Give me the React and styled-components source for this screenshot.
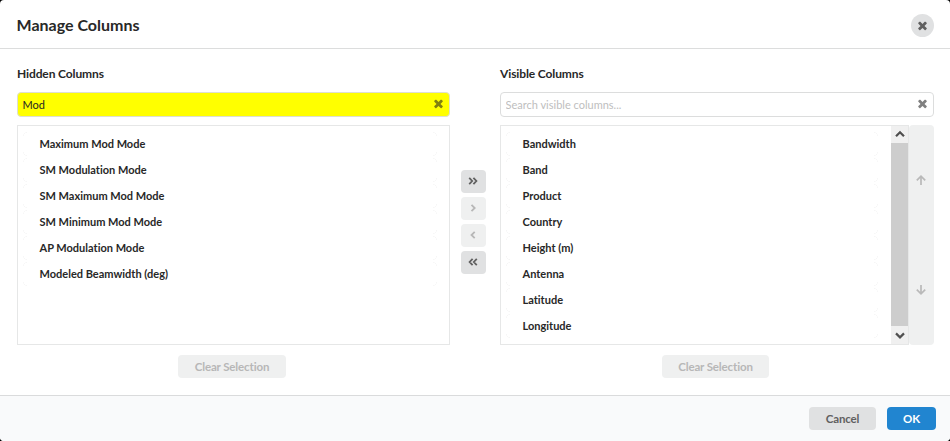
import React from 'react';
import styled, { createGlobalStyle, css } from 'styled-components';

const GlobalStyle = createGlobalStyle`
  * { box-sizing: border-box; }
  body {
    margin: 0;
    background: #000;
    font-family: Lato, "Liberation Sans", sans-serif;
    font-variant-ligatures: none;
    color: #282828;
  }
  button, input { font-family: inherit; font-variant-ligatures: none; margin: 0; }
`;

const Modal = styled.div`
  display: flex;
  flex-direction: column;
  height: 441px;
  background: #fff;
  border-radius: 4px;
  overflow: hidden;
`;

const Header = styled.header`
  display: flex;
  align-items: center;
  justify-content: space-between;
  height: 49px;
  padding: 2px 16px 0;
  border-bottom: 1px solid #dcdddd;
`;

const Title = styled.h1`
  margin: 0;
  padding: 0 0 0 0.5px;
  font-size: 16px;
  line-height: 20px;
  font-weight: 700;
`;

const CloseButton = styled.button`
  display: flex;
  align-items: center;
  justify-content: center;
  width: 23px;
  height: 23px;
  padding: 0 1px 0 0;
  border: 0;
  border-radius: 50%;
  background: #e0e1e2;
  color: #606060;
`;

const Body = styled.main`
  display: flex;
  height: 346px;
  padding: 17px 16px 0 17px;
`;

const Panel = styled.section`
  display: flex;
  flex-direction: column;
  width: ${(p) => p.$width}px;
`;

const PanelTitle = styled.h2`
  margin: 0 0 10px;
  height: 16px;
  font-size: 12px;
  line-height: 16px;
  font-weight: 700;
  letter-spacing: -0.12px;
`;

const SearchBox = styled.div`
  display: flex;
  align-items: center;
  height: 25px;
  padding: 0 4px 1px 4.5px;
  border: 1px solid ${(p) => (p.$active ? '#dedfd0' : '#dcdddd')};
  border-radius: 4px;
  background: ${(p) => (p.$active ? '#ffff00' : '#fff')};
  color: ${(p) => (p.$active ? '#80800f' : '#808080')};
`;

const SearchInput = styled.input`
  flex: 1;
  min-width: 0;
  height: 20px;
  padding: 1px 0 0;
  border: 0;
  outline: 0;
  background: transparent;
  color: #262626;
  font-size: 11px;
  &::placeholder { color: #bebebe; opacity: 1; }
`;

const SearchIcon = styled.span`
  display: flex;
  padding-bottom: 1px;
`;

const ListRow = styled.div`
  display: flex;
  height: 220px;
  margin-top: 8px;
`;

const ListFrame = styled.div`
  display: flex;
  flex: 1;
  border: 1px solid #e6e7e7;
`;

const List = styled.ul`
  flex: 1;
  margin: 0;
  padding: 6px ${(p) => (p.$scroll ? 13 : 12)}px 0 5px;
  list-style: none;
  overflow: hidden;
`;

const corner = (at) =>
  `radial-gradient(circle at ${at}, transparent 3px, #f5f5f5 3.4px, transparent 4.2px)`;

const Item = styled.li`
  height: 24px;
  margin-bottom: 2px;
  padding-left: 16.5px;
  font-size: 11px;
  line-height: 23px;
  font-weight: 700;
  white-space: nowrap;
  background:
    ${corner('100% 100%')} left top / 4px 4px no-repeat,
    ${corner('0 100%')} right top / 4px 4px no-repeat,
    ${corner('100% 0')} left bottom / 4px 4px no-repeat,
    ${corner('0 0')} right bottom / 4px 4px no-repeat;
`;

const Scrollbar = styled.div`
  display: flex;
  flex-direction: column;
  width: 17px;
  background: #f0f0f0;
`;

const ScrollCap = styled.div`
  display: flex;
  align-items: center;
  justify-content: center;
  height: ${(p) => p.$height}px;
  color: #505050;
`;

const Thumb = styled.div`
  flex: 1;
  background: #cdcdcd;
`;

const OrderBar = styled.div`
  display: flex;
  flex-direction: column;
  width: 25px;
  border-radius: 4px;
  background: #eff0f0;
`;

const OrderButton = styled.button`
  display: flex;
  flex: 1;
  align-items: center;
  justify-content: center;
  padding: 0 1px 0 0;
  border: 0;
  background: transparent;
  color: #b9b9b9;
`;

const Transfer = styled.div`
  display: flex;
  flex-direction: column;
  gap: 4px;
  width: 50px;
  padding: 104px 0 0 11px;
`;

const tone = {
  normal: css`background: #e0e1e2; color: #606060;`,
  disabled: css`background: #eff0f0; color: #b7b7b7;`,
  primary: css`background: #2185d0; color: #fff;`,
};

const Button = styled.button`
  display: flex;
  align-items: center;
  justify-content: center;
  width: ${(p) => p.$width}px;
  height: 23px;
  padding: 0;
  border: 0;
  border-radius: 4px;
  font-size: 11.5px;
  line-height: 23px;
  font-weight: 700;
  letter-spacing: -0.13px;
  ${(p) => tone[p.$tone]}
`;

const TransferButton = styled(Button)`
  padding: 0 1px 2px 0;
`;

const ClearButton = styled(Button)`
  margin: 10px 0 0 ${(p) => p.$offset}px;
`;

const Footer = styled.footer`
  display: flex;
  justify-content: flex-end;
  gap: 11px;
  height: 46px;
  padding: 11px 14px 0;
  border-top: 1px solid #dadbdc;
  background: #f9fafb;
`;

const Cross = ({ size = 13 }) => (
  <svg width={size} height={size} viewBox="0 0 1792 1792" fill="currentColor">
    <path d="M1490 1322q0 40-28 68l-136 136q-28 28-68 28t-68-28l-294-294-294 294q-28 28-68 28t-68-28l-136-136q-28-28-28-68t28-68l294-294-294-294q-28-28-28-68t28-68l136-136q28-28 68-28t68 28l294 294 294-294q28-28 68-28t68 28l136 136q28 28 28 68t-28 68l-294 294 294 294q28 28 28 68z" />
  </svg>
);

const Stroke = ({ d, w = 10, h = 10, weight = 1.8 }) => (
  <svg width={w} height={h} viewBox={`0 0 ${w} ${h}`} fill="none" stroke="currentColor" strokeWidth={weight}>
    <path d={d} />
  </svg>
);

const transfers = [
  { label: 'Show all', tone: 'normal', d: 'M1.2 1.8L4.2 5L1.2 8.2M5.4 1.8L8.4 5L5.4 8.2' },
  { label: 'Show selected', tone: 'disabled', d: 'M3.5 1.8L6.7 5L3.5 8.2' },
  { label: 'Hide selected', tone: 'disabled', d: 'M6.7 1.8L3.5 5L6.7 8.2' },
  { label: 'Hide all', tone: 'normal', d: 'M4.6 1.8L1.6 5L4.6 8.2M8.8 1.8L5.8 5L8.8 8.2' },
];

const hidden = ['Maximum Mod Mode', 'SM Modulation Mode', 'SM Maximum Mod Mode', 'SM Minimum Mod Mode', 'AP Modulation Mode', 'Modeled Beamwidth (deg)'];
const visible = ['Bandwidth', 'Band', 'Product', 'Country', 'Height (m)', 'Antenna', 'Latitude', 'Longitude'];

export default function App() {
  return (
    <>
      <GlobalStyle />
      <Modal>
        <Header>
          <Title>Manage Columns</Title>
          <CloseButton aria-label="Close"><Cross /></CloseButton>
        </Header>
        <Body>
          <Panel $width={433}>
            <PanelTitle>Hidden Columns</PanelTitle>
            <SearchBox $active>
              <SearchInput defaultValue="Mod" />
              <SearchIcon><Cross /></SearchIcon>
            </SearchBox>
            <ListRow>
              <ListFrame>
                <List>{hidden.map((name) => <Item key={name}>{name}</Item>)}</List>
              </ListFrame>
            </ListRow>
            <ClearButton $tone="disabled" $width={108} $offset={161}>Clear Selection</ClearButton>
          </Panel>
          <Transfer>
            {transfers.map((t) => (
              <TransferButton key={t.label} aria-label={t.label} $tone={t.tone} $width={25}>
                <Stroke d={t.d} />
              </TransferButton>
            ))}
          </Transfer>
          <Panel $width={434}>
            <PanelTitle>Visible Columns</PanelTitle>
            <SearchBox>
              <SearchInput placeholder="Search visible columns..." />
              <SearchIcon><Cross /></SearchIcon>
            </SearchBox>
            <ListRow>
              <ListFrame>
                <List $scroll>{visible.map((name) => <Item key={name}>{name}</Item>)}</List>
                <Scrollbar>
                  <ScrollCap $height={17}><Stroke d="M1 6.2L5 2.2L9 6.2" weight={2.2} /></ScrollCap>
                  <Thumb />
                  <ScrollCap $height={18}><Stroke d="M1 3.4L5 7.4L9 3.4" weight={2.2} /></ScrollCap>
                </Scrollbar>
              </ListFrame>
              <OrderBar>
                <OrderButton aria-label="Move up"><Stroke d="M5 10V1.4M0.8 5.4L5 1.2L9.2 5.4" weight={1.7} /></OrderButton>
                <OrderButton aria-label="Move down"><Stroke d="M5 0V8.6M0.8 4.6L5 8.8L9.2 4.6" weight={1.7} /></OrderButton>
              </OrderBar>
            </ListRow>
            <ClearButton $tone="disabled" $width={107} $offset={162}>Clear Selection</ClearButton>
          </Panel>
        </Body>
        <Footer>
          <Button $tone="normal" $width={67}>Cancel</Button>
          <Button $tone="primary" $width={49}>OK</Button>
        </Footer>
      </Modal>
    </>
  );
}
